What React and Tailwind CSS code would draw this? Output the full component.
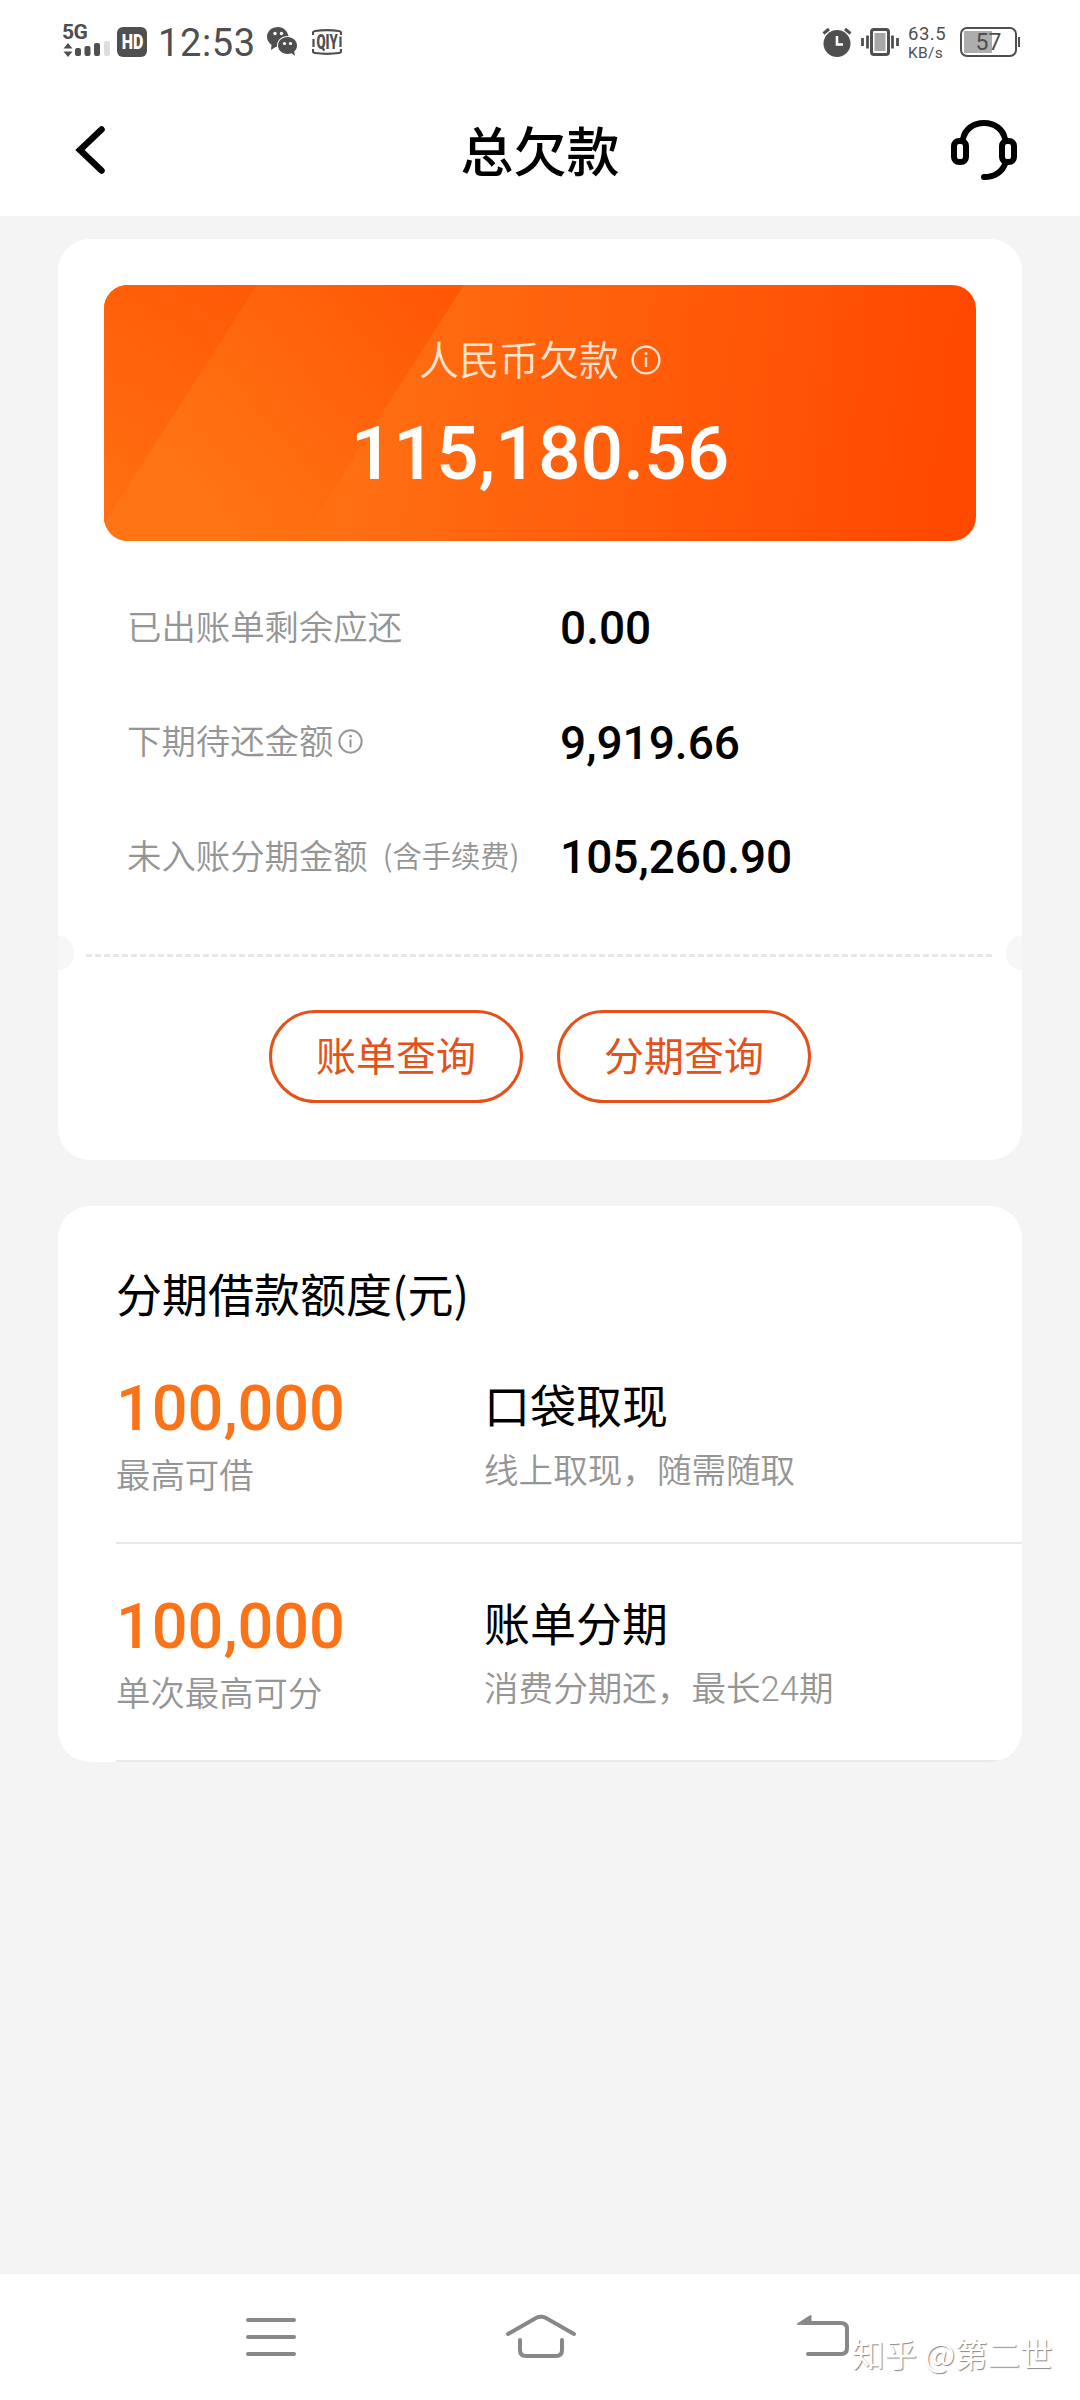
import React from 'react';

const debtRows = [
    { label: '已出账单剩余应还', value: '0.00' },
    { label: '下期待还金额', value: '9,919.66', info: true },
    { label: '未入账分期金额', note: '(含手续费)', value: '105,260.90' },
];

const loanRows = [
    { amount: '100,000', caption: '最高可借', title: '口袋取现', desc: '线上取现，随需随取' },
    { amount: '100,000', caption: '单次最高可分', title: '账单分期', desc: '消费分期还，最长24期' },
];

const InfoIcon = ({ className }) => (
    <svg viewBox="0 0 30 30" className={className} fill="none" stroke="currentColor" strokeWidth="2.4">
        <circle cx="15" cy="15" r="13.4" />
        <path d="M15 12.5v9.5" />
        <circle cx="15" cy="8.6" r="1.6" fill="currentColor" stroke="none" />
    </svg>
);

const StatusBar = () => (
    <div className="flex h-[84px] items-start justify-between pl-[62px] pr-[60px] pt-[24px] text-[#4f4f4f]">
        <div className="flex items-start">
            <div className="w-[55px]">
                <div className="h-[17px] font-['Roboto'] text-[21px] font-bold leading-[17px] tracking-[-0.5px]">5G</div>
                <svg viewBox="0 0 48 17" className="h-[17px] w-[48px]" fill="currentColor">
                    <path d="M6 2l4.5 5.5h-9zM6 16l-4.5-5.5h9z" />
                    <rect x="13" y="7" width="6" height="8" rx="2" />
                    <rect x="22.5" y="5" width="6" height="10" rx="2" />
                    <rect x="32" y="2" width="6" height="13" rx="2" />
                    <rect x="42" y="0" width="6" height="15" rx="2" fill="#dedede" />
                </svg>
            </div>
            <div className="mt-[3px] flex h-[30px] w-[30px] items-center justify-center rounded-[6px] bg-[#4f4f4f] font-['Roboto'] text-[20px] font-black leading-none text-white">
                <span className="scale-x-[0.8]">HD</span>
            </div>
            <div className="ml-[11px] mt-[-1px] w-[98px] whitespace-nowrap font-['Roboto'] text-[38px] leading-[40px] tracking-[0.6px]">12:53</div>
            <svg viewBox="0 0 31 30" className="ml-[11px] mt-[3px] h-[30px] w-[31px]" fill="currentColor">
                <path d="M11 0C4.8 0 0 4.2 0 9.8c0 3.4 1.8 6.1 4.5 8L4 23l5-3.3 1 .2C9.5 13.5 14 9 21.5 9 20.5 4 16.5 0 11 0z" />
                <path d="M20.5 10c-5.4 0-9.5 3.7-9.5 8.5s4.1 8.5 9.5 8.5c1.5 0 2.7-.2 4-.7l3.5 2.5-.8-4.2c1.9-1.6 2.8-3.7 2.8-6.1 0-4.8-4.1-8.5-9.5-8.5z" />
                <circle cx="8" cy="6.5" r="1.7" fill="#fff" />
                <circle cx="14.5" cy="6.5" r="1.7" fill="#fff" />
                <circle cx="17.5" cy="16.5" r="1.6" fill="#fff" />
                <circle cx="23.5" cy="16.5" r="1.6" fill="#fff" />
            </svg>
            <div className="relative ml-[14px] mt-[5px] flex h-[26px] w-[30px] items-center justify-center">
                <svg viewBox="0 0 30 26" className="absolute inset-0" fill="none" stroke="currentColor" strokeWidth="2.2">
                    <path d="M1 6V4q0-1.8 2-2Q15 .4 27 2q2 .2 2 2v2M1 20v2q0 1.8 2 2 12 1.6 24 0 2-.2 2-2v-2M1.5 10v8M28.5 7.5V18" />
                </svg>
                <span className="scale-x-[0.66] font-['Roboto'] text-[20px] font-black leading-none">QIY</span>
            </div>
        </div>
        <div className="flex items-start pt-[3px]">
            <svg viewBox="0 0 30 30" className="h-[30px] w-[30px]" fill="currentColor">
                <circle cx="15" cy="16.5" r="13.5" />
                <path d="M1.5 6.5L7 2M23 2l5.5 4.5" stroke="currentColor" strokeWidth="3" fill="none" />
                <path d="M15 9v8.5h6" stroke="#fff" strokeWidth="2.6" fill="none" />
            </svg>
            <svg viewBox="0 0 38 30" className="ml-[9px] h-[30px] w-[38px]" fill="none" stroke="currentColor">
                <rect x="10.5" y="2.5" width="17" height="25" rx="2.5" strokeWidth="3" />
                <rect x="13.5" y="6" width="11" height="18" fill="#a8a8a8" stroke="none" />
                <path d="M1.5 11v8M6.5 8.5v13M31.5 8.5v13M36.5 11v8" strokeWidth="2.8" />
            </svg>
            <div className="ml-[9px] mt-[-3px] w-[52px] whitespace-nowrap font-['Roboto']">
                <div className="h-[21px] text-[18.5px] leading-[21px] tracking-[0.5px]">63.5</div>
                <div className="h-[16px] text-[15.5px] leading-[16px] tracking-[0.3px]">KB/s</div>
            </div>
            <div className="relative flex h-[30px] w-[57px] items-center justify-center overflow-hidden rounded-[7px] border-[2px] border-[#4f4f4f]">
                <div className="absolute inset-y-[2px] left-[2px] w-[28px] bg-[#adadad]" />
                <span className="relative font-['Roboto'] text-[23px] leading-none">57</span>
            </div>
            <div className="ml-px mt-[10px] h-[10px] w-[2px] bg-[#4f4f4f]" />
        </div>
    </div>
);

const Header = () => (
    <div className="flex h-[132px] items-center justify-between pl-[72px] pr-[63px] text-black">
        <svg viewBox="0 0 36 50" className="h-[50px] w-[36px]" fill="none" stroke="currentColor" strokeWidth="6.5" strokeLinecap="round" strokeLinejoin="miter">
            <path d="M29.5 4.5L8 25l21.5 20.5" />
        </svg>
        <h1 className="pb-px pl-[27px] text-[53px] font-medium leading-none">总欠款</h1>
        <svg viewBox="0 0 72 60" className="h-[60px] w-[72px]" fill="none" stroke="currentColor" strokeWidth="6" strokeLinecap="round">
            <rect x="9" y="21" width="12" height="21" rx="5" />
            <rect x="57" y="21" width="12" height="21" rx="5" />
            <path d="M18 19C20 9 28.5 3 39 3s19 6 21 16M60.5 43C57 52 50 57 39 57" />
        </svg>
    </div>
);

const TotalBanner = () => (
    <div className="relative h-[256px] overflow-hidden rounded-[24px] text-white">
        <svg viewBox="0 0 872 256" className="absolute inset-0 h-full w-full">
            <defs>
                <linearGradient id="base" gradientUnits="userSpaceOnUse" x1="230" y1="150" x2="850" y2="230">
                    <stop offset="0" stopColor="#ff7013" />
                    <stop offset="1" stopColor="#ff4800" />
                </linearGradient>
                <linearGradient id="middle" gradientUnits="userSpaceOnUse" x1="90" y1="200" x2="330" y2="0">
                    <stop offset="0" stopColor="#ff7414" />
                    <stop offset="1" stopColor="#ff5706" />
                </linearGradient>
                <linearGradient id="corner" gradientUnits="userSpaceOnUse" x1="0" y1="240" x2="150" y2="0">
                    <stop offset="0" stopColor="#ff7012" />
                    <stop offset="1" stopColor="#ff5907" />
                </linearGradient>
            </defs>
            <path d="M0 0h872v256H0z" fill="url(#base)" />
            <path d="M0 0h360L196 256H0z" fill="url(#middle)" />
            <path d="M0 0h153L0 239z" fill="url(#corner)" />
        </svg>
        <div className="relative flex flex-col items-center pt-[52px]">
            <div className="flex items-center text-[#ffe3d1]">
                <span className="text-[40px] font-[350] leading-[42px]">人民币欠款</span>
                <InfoIcon className="ml-[12px] mt-[4px] h-[30px] w-[30px]" />
            </div>
            <div className="mt-[32px] font-['Roboto'] text-[75px] font-medium leading-[84px]">115,180.56</div>
        </div>
    </div>
);

const DebtCard = () => (
    <section className="relative h-[921px] rounded-[32px] bg-white px-[46px] pt-[46px]">
        <TotalBanner />
        <div className="mt-[29px] pl-[23px]">
            {debtRows.map((row) => (
                <div key={row.label} className="flex h-[114.5px] items-center">
                    <div className="flex w-[433px] items-center pb-[3px] text-[34.4px] font-[350] text-[#959595]">
                        <span>{row.label}</span>
                        {row.info && <InfoIcon className="ml-[5px] mt-[2px] h-[25px] w-[25px]" />}
                        {row.note && <span className="ml-[15px] text-[29.3px]">{row.note}</span>}
                    </div>
                    <div className="pt-[2px] font-['Roboto'] text-[46px] font-medium leading-none text-black">{row.value}</div>
                </div>
            ))}
        </div>

        {/* Ticket style tear line */}
        <div className="absolute left-0 top-[697px] h-[34px] w-[16px] rounded-r-full bg-[#f7f7f7]" />
        <div className="absolute right-0 top-[697px] h-[34px] w-[16px] rounded-l-full bg-[#f7f7f7]" />
        <div className="-mx-[18px] mt-[40px] h-[3px] bg-[repeating-linear-gradient(90deg,#e7e7e7_0_6px,transparent_6px_9px)]" />

        <div className="mt-[53px] flex justify-center gap-[34px]">
            {['账单查询', '分期查询'].map((text) => (
                <button key={text} className="h-[93px] w-[254px] rounded-full border-[3px] border-[#e2521a] pb-[4px] text-[40px] leading-none text-[#e2521a]">
                    {text}
                </button>
            ))}
        </div>
    </section>
);

const LoanCard = () => (
    <section className="mt-[46px] h-[556px] overflow-hidden rounded-[32px] bg-white pl-[58px] pt-[53px]">
        <h2 className="h-[67px] text-[46px] leading-[66px] text-black">分期借款额度(元)</h2>
        {loanRows.map((row) => (
            <div key={row.title} className="flex h-[218px] border-b-2 border-[#e8eae8]">
                <div className="w-[368px] pt-[45px]">
                    <div className="font-['Roboto'] text-[63px] font-medium leading-[76px] text-[#fa7319]">{row.amount}</div>
                    <div className="mt-[4px] text-[34.4px] font-[350] leading-[44px] text-[#959595]">{row.caption}</div>
                </div>
                <div className="pt-[47px]">
                    <div className="text-[46px] leading-[60px] text-black">{row.title}</div>
                    <div className="mt-[16px] font-['Roboto','Noto_Sans_CJK_SC',sans-serif] text-[34.6px] font-[350] leading-[44px] text-[#959595]">{row.desc}</div>
                </div>
            </div>
        ))}
    </section>
);

const NavBar = () => (
    <nav className="relative flex h-[126px] items-start bg-white pt-[38px] text-[#888]">
        <svg viewBox="0 0 52 46" className="ml-[245px] h-[46px] w-[52px]" fill="none" stroke="currentColor" strokeWidth="4" strokeLinecap="round">
            <path d="M3 8h46M3 25h46M3 42h46" />
        </svg>
        <svg viewBox="0 0 72 46" className="ml-[208px] h-[46px] w-[72px]" fill="none" stroke="currentColor" strokeWidth="4" strokeLinecap="round">
            <path d="M3 22L31 6q5-2.5 10 0L69 22M15 28v10q0 6 6 6h30q6 0 6-6V28" />
        </svg>
        <svg viewBox="0 0 54 46" className="ml-[220px] h-[46px] w-[54px]" fill="none" stroke="currentColor" strokeWidth="4" strokeLinecap="round">
            <path d="M6 11h38q6 0 6 6v19q0 6-6 6H11" />
            <path d="M1 12L13.5 4v7z" fill="currentColor" stroke="currentColor" strokeWidth="2" strokeLinejoin="round" />
        </svg>
        <div className="absolute left-[852px] top-[58px] whitespace-nowrap text-[32.5px] leading-[42px] text-white [text-shadow:1px_1px_1px_#888]">
            知乎 @第二世
        </div>
    </nav>
);

const App = () => {
    return (
        <div className="flex h-[2400px] w-[1080px] flex-col overflow-hidden bg-[#f4f4f4] font-['Noto_Sans_CJK_SC',sans-serif]">
            <div className="bg-white">
                <StatusBar />
                <Header />
            </div>
            <main className="flex-1 px-[58px] pt-[23px]">
                <DebtCard />
                <LoanCard />
            </main>
            <NavBar />
        </div>
    );
};

export default App;
